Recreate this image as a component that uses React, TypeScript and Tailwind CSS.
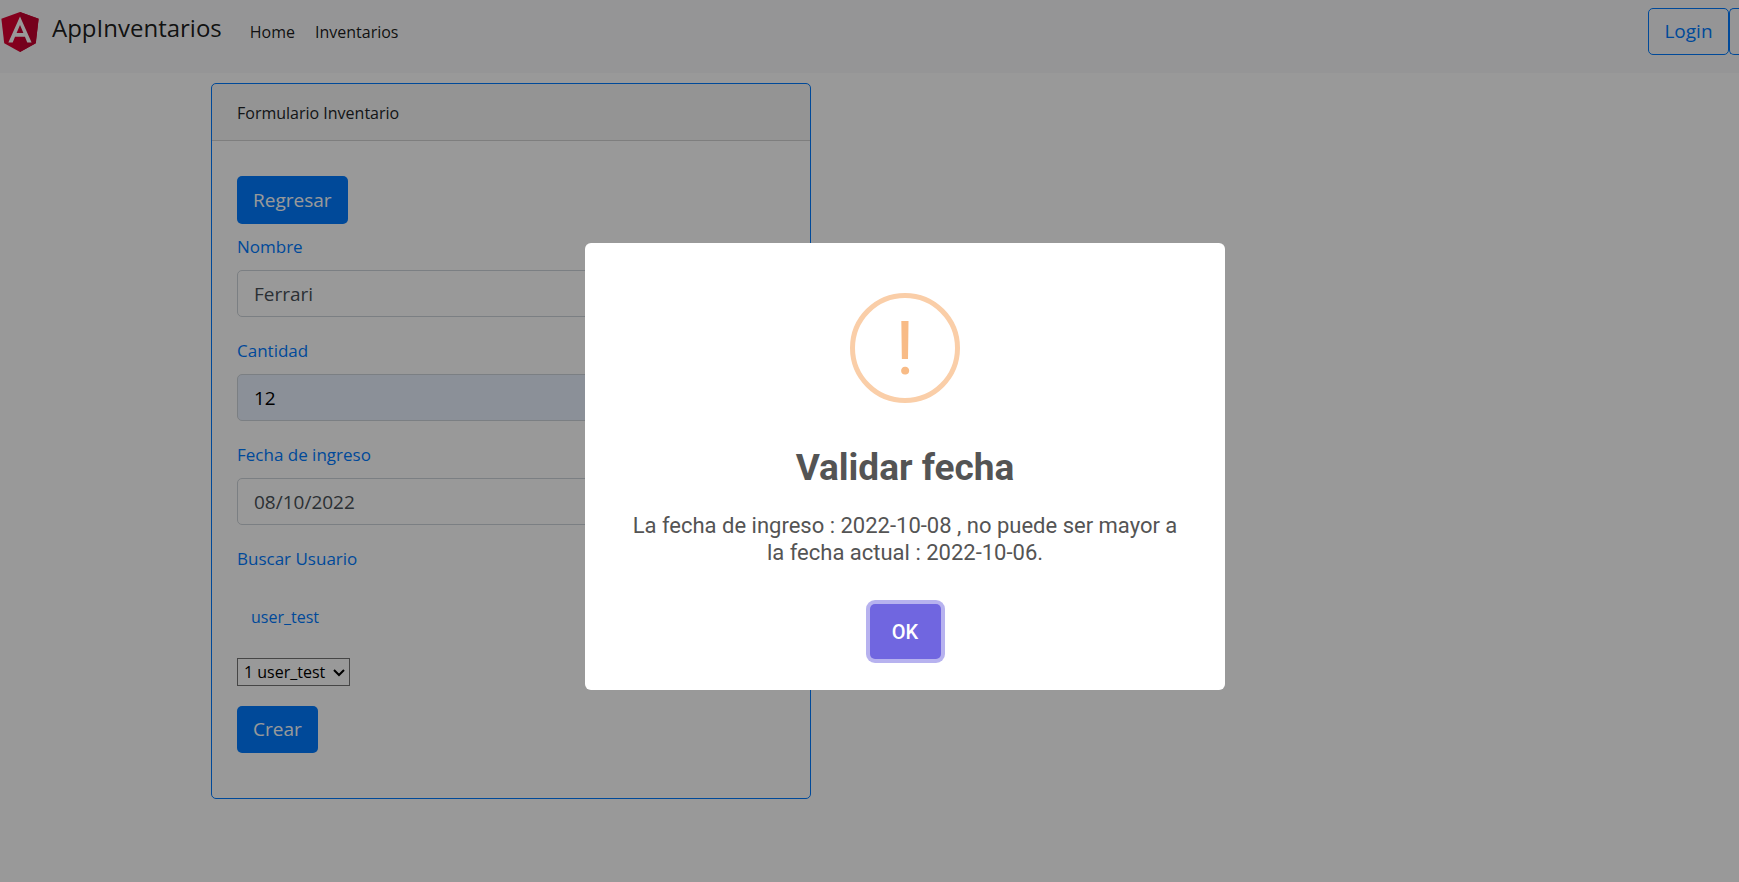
import React from "react";

function AngularLogo() {
  return (
    <svg viewBox="30 30 190 200" className="h-10 w-[38px] shrink-0" aria-hidden="true">
      <path fill="#dd0031" d="M125 30 31.9 63.2l14.2 123.1L125 230l78.9-43.7 14.2-123.1z" />
      <path fill="#c3002f" d="M125 30v200l78.9-43.7 14.2-123.1z" />
      <path
        fill="#fff"
        d="M125 52.1 66.8 182.6h21.7l11.7-29.2h49.4l11.7 29.2H183zm17 83.3h-34l17-40.9z"
      />
    </svg>
  );
}

const outlineButton =
  "h-[47px] rounded-[5px] border border-[#007bff] text-[19px] text-[#007bff]";
const primaryButton = "rounded-[5px] bg-[#007bff] px-4 text-[19px] text-white";

function Navbar() {
  return (
    <nav className="flex h-[73px] items-start overflow-hidden bg-[#f8f9fa] pl-px text-black/90">
      <a href="#" className="flex pt-3">
        <AngularLogo />
        <span className="ml-[13px] text-[24px] leading-8">AppInventarios</span>
      </a>
      <div className="ml-7 flex gap-5 pt-5 text-[16px] leading-6">
        <a href="#home">Home</a>
        <a href="#inventarios">Inventarios</a>
      </div>
      <div className="ml-auto flex pt-2">
        <button type="button" className={`${outlineButton} w-[81px]`}>
          Login
        </button>
        <button
          type="button"
          aria-label="Registro"
          className={`${outlineButton} w-[10px] rounded-r-none border-r-0`}
        />
      </div>
    </nav>
  );
}

type FieldProps = { id: string; label: string; value: string; tone?: string };

function Field({ id, label, value, tone = "bg-white text-[#495057]" }: FieldProps) {
  return (
    <div className="mb-[21px]">
      <label htmlFor={id} className="mb-[10px] block text-[17px] leading-[26px] text-[#007bff]">
        {label}
      </label>
      <input
        id={id}
        defaultValue={value}
        className={`block h-[47px] w-full rounded-[5px] border border-[#ced4da] px-4 text-[19px] ${tone}`}
      />
    </div>
  );
}

function InventoryForm() {
  return (
    <section className="max-w-[600px] rounded-[5px] border border-[#007bff] bg-white">
      <h2 className="border-b border-black/15 bg-black/[0.03] px-[25px] pt-4 pb-[14px] text-[16px] leading-[26px] text-[#212529]">
        Formulario Inventario
      </h2>
      <form className="px-[25px] pt-[35px] pb-[45px]" onSubmit={(e) => e.preventDefault()}>
        <button type="button" className={`${primaryButton} mb-[10px] h-12`}>
          Regresar
        </button>
        <Field id="nombre" label="Nombre" value="Ferrari" />
        <Field id="cantidad" label="Cantidad" value="12" tone="bg-[#e8f0fe] text-black" />
        <Field id="fecha" label="Fecha de ingreso" value="08/10/2022" />
        <label htmlFor="usuario" className="block text-[17px] leading-[26px] text-[#007bff]">
          Buscar Usuario
        </label>
        <p className="mt-8 pl-[14px] text-[16px] leading-[26px] text-[#007bff]">user_test</p>
        <div className="relative mt-7 w-[113px]">
          <select
            id="usuario"
            className="block h-7 w-full appearance-none border border-[#767676] bg-white pl-[6px] text-[16px] leading-6 text-black"
          >
            <option>1 user_test</option>
          </select>
          <svg
            viewBox="0 0 12 8"
            className="pointer-events-none absolute top-[11px] right-[5px] h-2 w-3"
            fill="none"
            stroke="#000"
            strokeWidth="2"
            aria-hidden="true"
          >
            <path d="m1 1 5 5 5-5" />
          </svg>
        </div>
        <button type="submit" className={`${primaryButton} mt-5 block h-[47px]`}>
          Crear
        </button>
      </form>
    </section>
  );
}

function DateAlert() {
  return (
    <div className="fixed inset-0 flex items-start justify-center bg-black/40 pt-[243px] pl-[71px]">
      <div
        role="alertdialog"
        aria-labelledby="alert-title"
        aria-describedby="alert-text"
        className="flex w-full max-w-[640px] flex-col items-center rounded-[6px] bg-white pt-[50px] pb-[31px] font-[Roboto,sans-serif] text-[#545454]"
      >
        <div className="flex size-[110px] items-center justify-center rounded-full border-[5px] border-[#facea8] text-[75px] leading-none text-[#f8bb86]">
          !
        </div>
        <h1 id="alert-title" className="mt-[43px] text-[37px] leading-[44px] font-bold">
          Validar fecha
        </h1>
        <p id="alert-text" className="mt-[22px] px-10 text-center text-[22px] leading-[27px]">
          La fecha de ingreso : 2022-10-08 , no puede ser mayor a la fecha actual : 2022-10-06.
        </p>
        <button
          type="button"
          className="mt-[38px] h-[55px] w-[71px] rounded-[5px] bg-[#7066e0] text-[20px] font-medium text-white ring-4 ring-[#7066e0]/50"
        >
          OK
        </button>
      </div>
    </div>
  );
}

export default function App() {
  return (
    <div className="min-h-screen bg-white font-['Open_Sans',sans-serif]">
      <Navbar />
      <main className="mx-auto max-w-[1317px] pt-[10px]">
        <InventoryForm />
      </main>
      <DateAlert />
    </div>
  );
}
